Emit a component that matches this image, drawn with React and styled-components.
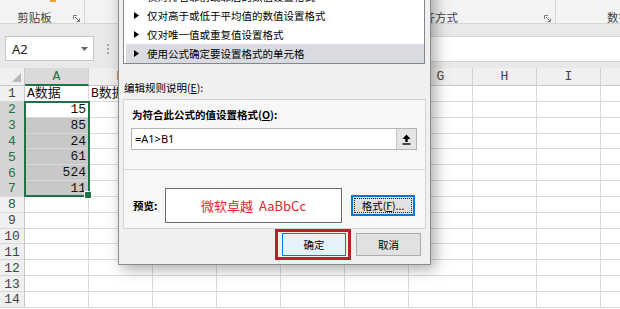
import React from 'react'
import styled, { createGlobalStyle } from 'styled-components'

const ROW_H = 15.85
const GREEN = '#217346'
const COLS = ['A', 'B', 'C', 'D', 'E', 'F', 'G', 'H', 'I', 'J']
const DATA = { A1: 'A数据', B1: 'B数据', A2: 15, A3: 85, A4: 24, A5: 61, A6: 524, A7: 11 }
const RULES = [
  '仅对排名靠前或靠后的数值设置格式',
  '仅对高于或低于平均值的数值设置格式',
  '仅对唯一值或重复值设置格式',
  '使用公式确定要设置格式的单元格',
]

const GlobalStyle = createGlobalStyle`
  html, body { margin: 0; padding: 0; }
  body {
    width: 620px;
    height: 309px;
    overflow: hidden;
    background: #fff;
    font-family: "Noto Sans CJK SC", "Noto Sans", sans-serif;
  }
`

const Screen = styled.div`
  position: relative;
  width: 620px;
  height: 309px;
  overflow: hidden;
  background: #fff;
`

/* ribbon */
const Ribbon = styled.div`
  display: flex;
  height: 24px;
  background: #f3f3f3;
  border-bottom: 1px solid #d5d5d5;
  box-sizing: border-box;
  overflow: hidden;
`

const RibbonGroup = styled.div`
  position: relative;
  flex: 0 0 ${({ $w }) => $w}px;
  display: flex;
  align-items: flex-end;
  justify-content: ${({ $start }) => ($start ? 'flex-start' : 'center')};
  padding-right: ${({ $pr }) => $pr || 0}px;
  padding-left: ${({ $pl }) => $pl || 0}px;
  box-sizing: border-box;
  border-right: 1px solid #d6d6d6;
  font-size: 11.5px;
  line-height: 12px;
  color: #444;
  white-space: nowrap;
`

const Launcher = styled.svg`
  position: absolute;
  right: 4px;
  bottom: 1px;
`

const PasteTip = styled.span`
  position: absolute;
  top: 0;
  left: 50px;
  width: 6px;
  height: 2px;
  background: #f0a030;
`

/* formula bar */
const FormulaArea = styled.div`
  display: flex;
  align-items: center;
  height: 44px;
  padding: 12px 0 7px;
  box-sizing: border-box;
  background: #e9e9e9;
`

const NameBox = styled.div`
  display: flex;
  align-items: center;
  width: 89px;
  height: 25px;
  margin-left: 5px;
  padding: 0 5px 0 6px;
  box-sizing: border-box;
  background: #fff;
  border: 1px solid #c6c6c6;
  font-family: "Noto Sans", sans-serif;
  font-size: 13px;
  color: #222;
  svg { margin-left: auto; }
`

const Dots = styled.div`
  display: flex;
  flex-direction: column;
  gap: 2px;
  margin-left: 13px;
  span { width: 2px; height: 2px; background: #a8a8a8; }
`

const FormulaInput = styled.div`
  flex: 1;
  height: 24px;
  margin-left: 70px;
  background: #fff;
  border: 1px solid #d4d4d4;
  border-right: none;
`

/* sheet */
const Sheet = styled.div`
  display: grid;
  grid-template-columns: 25px repeat(10, 64px);
  grid-template-rows: 18px repeat(14, ${ROW_H}px);
  font-family: "Liberation Mono", "Noto Sans CJK SC", monospace;
  font-size: 13px;
`

const Corner = styled.div`
  display: flex;
  align-items: flex-end;
  justify-content: flex-end;
  padding: 0 3px 3px 0;
  box-sizing: border-box;
  background: #f0f0f0;
  border-right: 1px solid #c8c8c8;
  border-bottom: 1px solid #c8c8c8;
`

const ColHeader = styled.div`
  display: flex;
  align-items: center;
  justify-content: center;
  box-sizing: border-box;
  background: ${({ $active }) => ($active ? '#dadada' : '#f0f0f0')};
  color: ${({ $active }) => ($active ? GREEN : '#444')};
  border-right: 1px solid #d2d2d2;
  border-bottom: ${({ $active }) => ($active ? `2px solid ${GREEN}` : '1px solid #c8c8c8')};
  line-height: 1;
`

const RowHeader = styled.div`
  display: flex;
  align-items: center;
  justify-content: center;
  box-sizing: border-box;
  background: ${({ $active }) => ($active ? '#d4d4d4' : '#f0f0f0')};
  color: ${({ $active }) => ($active ? GREEN : '#444')};
  border-right: 1px solid #c8c8c8;
  border-bottom: 1px solid #d8d8d8;
  padding-top: 1px;
  line-height: 1;
`

const Cell = styled.div`
  position: relative;
  box-sizing: border-box;
  padding: 1px 2px 0;
  background: ${({ $shaded }) => ($shaded ? '#c8c8c8' : '#fff')};
  border-right: 1px solid #dadada;
  border-bottom: 1px solid #dadada;
  text-align: ${({ $num }) => ($num ? 'right' : 'left')};
  line-height: ${ROW_H - 2}px;
  white-space: nowrap;
  color: #111;
`

const SelectionFrame = styled.div`
  position: absolute;
  top: -1px;
  left: -1px;
  width: 66px;
  height: calc(${ROW_H * 6}px + 1px);
  box-sizing: border-box;
  border: 2px solid ${GREEN};
  z-index: 2;
  span {
    position: absolute;
    right: -4px;
    bottom: -4px;
    width: 6px;
    height: 6px;
    background: ${GREEN};
    border: 1px solid #fff;
  }
`

/* dialog */
const Dialog = styled.div`
  position: absolute;
  left: 118px;
  top: -21px;
  width: 313px;
  box-sizing: border-box;
  background: #f0f0f0;
  border: 1px solid #8a8a8a;
  box-shadow: 4px 4px 14px rgba(0, 0, 0, 0.34);
  font-family: "Noto Sans CJK SC", "Noto Sans", sans-serif;
  font-size: 10.5px;
  line-height: 16px;
  color: #000;
  z-index: 5;
  u { text-decoration: underline; }
`

const RuleList = styled.div`
  margin: 6px 5px 0 4px;
  background: #fff;
  border: 1px solid #82878f;
`

const RuleItem = styled.div`
  display: flex;
  align-items: center;
  gap: 8px;
  height: 19px;
  margin-left: 2px;
  padding-left: 8px;
  background: ${({ $selected }) => ($selected ? '#dadbe0' : 'transparent')};
`

const SectionLabel = styled.div`
  margin: 16px 0 3px 5px;
`

const GroupBox = styled.div`
  margin: 0 4px;
  background: #f7f7f7;
  border: 1px solid #d5d5d5;
`

const GroupTitle = styled.div`
  padding: 7px 8px 0;
  font-weight: 700;
`

const FormulaField = styled.div`
  display: flex;
  align-items: stretch;
  height: 22px;
  margin: 5px 8px 0 7px;
  box-sizing: border-box;
  background: #fff;
  border: 1px solid #b4b4b4;
`

const FieldText = styled.div`
  flex: 1;
  display: flex;
  align-items: center;
  padding-left: 3px;
  font-family: "Noto Sans", sans-serif;
  font-size: 11px;
`

const RefButton = styled.div`
  display: flex;
  align-items: center;
  justify-content: center;
  width: 19px;
  background: #e5e5e5;
  border-left: 1px solid #c4c4c4;
`

const Divider = styled.div`
  margin-top: 19px;
  border-top: 1px solid #d8d8d8;
`

const PreviewRow = styled.div`
  display: flex;
  align-items: center;
  padding: 18px 9px 5px;
`

const PreviewLabel = styled.div`
  width: 32px;
  font-weight: 700;
`

const PreviewBox = styled.div`
  display: flex;
  align-items: center;
  justify-content: center;
  gap: 6px;
  width: 177px;
  height: 35px;
  box-sizing: border-box;
  background: #fff;
  border: 1px solid #6e6e6e;
  color: #e3262b;
  font-size: 13px;
`

const DlgButton = styled.div`
  display: flex;
  align-items: center;
  justify-content: center;
  width: ${({ $w }) => $w || 64}px;
  height: ${({ $h }) => $h || 23}px;
  box-sizing: border-box;
  background: ${({ $primary }) => ($primary ? '#e5f1fb' : '#e1e1e1')};
  border: 1px solid ${({ $primary, $focus }) => ($primary || $focus ? '#0078d7' : '#adadad')};
  box-shadow: ${({ $focus }) => ($focus ? 'inset 0 0 0 1px #0078d7' : 'none')};
`

const FocusRing = styled.span`
  display: flex;
  align-items: center;
  justify-content: center;
  width: calc(100% - 4px);
  height: calc(100% - 4px);
  box-sizing: border-box;
  border: 1px dotted #222;
`

const FormatSlot = styled.div`
  margin-left: 9px;
`

const ButtonRow = styled.div`
  display: flex;
  justify-content: flex-end;
  gap: 10px;
  padding: 4px 9px 8px 0;
`

const Highlight = styled.div`
  position: relative;
  &::after {
    content: '';
    position: absolute;
    top: -4px;
    bottom: -4px;
    left: -7px;
    right: -5px;
    border: 3px solid #b8212b;
    pointer-events: none;
  }
`

const LauncherIcon = () => (
  <Launcher width="7" height="7" viewBox="0 0 7 7">
    <path d="M0.5 4V0.5H4M2 2l4.2 4.2M6.5 3.5v3h-3" stroke="#7a7a7a" strokeWidth="1" fill="none" />
  </Launcher>
)

const App = () => {
  const rows = Array.from({ length: 14 }, (_, i) => i + 1)

  return (
    <Screen>
      <GlobalStyle />

      <Ribbon>
        <RibbonGroup $w={85} $pr={15}>
          <PasteTip />
          剪贴板
          <LauncherIcon />
        </RibbonGroup>
        <RibbonGroup $w={230}><LauncherIcon /></RibbonGroup>
        <RibbonGroup $w={241}>对齐方式<LauncherIcon /></RibbonGroup>
        <RibbonGroup $w={120} $start $pl={51}>数字</RibbonGroup>
      </Ribbon>

      <FormulaArea>
        <NameBox>
          A2
          <svg width="7" height="4" viewBox="0 0 7 4"><path d="M0 0h7L3.5 4z" fill="#666" /></svg>
        </NameBox>
        <Dots><span /><span /><span /></Dots>
        <FormulaInput />
      </FormulaArea>

      <Sheet>
        <Corner>
          <svg width="9" height="9" viewBox="0 0 9 9"><path d="M9 0v9H0z" fill="#b9b9b9" /></svg>
        </Corner>
        {COLS.map((c) => (
          <ColHeader key={c} $active={c === 'A'}>{c}</ColHeader>
        ))}
        {rows.map((r) => (
          <React.Fragment key={r}>
            <RowHeader $active={r >= 2 && r <= 7}>{r}</RowHeader>
            {COLS.map((c) => {
              const v = DATA[c + r]
              const inSel = c === 'A' && r >= 2 && r <= 7
              return (
                <Cell key={c} $num={typeof v === 'number'} $shaded={inSel && r !== 2}>
                  {v}
                  {c === 'A' && r === 2 && <SelectionFrame><span /></SelectionFrame>}
                </Cell>
              )
            })}
          </React.Fragment>
        ))}
      </Sheet>

      <Dialog>
        <RuleList>
          {RULES.map((t, i) => (
            <RuleItem key={t} $selected={i === RULES.length - 1}>
              <svg width="5" height="7" viewBox="0 0 5 7"><path d="M0 0l5 3.5L0 7z" fill="#000" /></svg>
              {t}
            </RuleItem>
          ))}
        </RuleList>

        <SectionLabel>编辑规则说明(<u>E</u>):</SectionLabel>

        <GroupBox>
          <GroupTitle>为符合此公式的值设置格式(<u>O</u>):</GroupTitle>
          <FormulaField>
            <FieldText>=A1&gt;B1</FieldText>
            <RefButton>
              <svg width="9" height="11" viewBox="0 0 9 11">
                <path d="M4.5 0.5L8.5 5H5.7v3H3.3V5H0.5z" fill="#000" />
                <rect x="0.5" y="9.3" width="8" height="1.4" fill="#000" />
              </svg>
            </RefButton>
          </FormulaField>
          <Divider />
          <PreviewRow>
            <PreviewLabel>预览:</PreviewLabel>
            <PreviewBox>
              <span>微软卓越</span>
              <span>AaBbCc</span>
            </PreviewBox>
            <FormatSlot>
              <DlgButton $focus $w={64} $h={21}>
                <FocusRing>格式(<u>F</u>)...</FocusRing>
              </DlgButton>
            </FormatSlot>
          </PreviewRow>
        </GroupBox>

        <ButtonRow>
          <Highlight>
            <DlgButton $primary>确定</DlgButton>
          </Highlight>
          <DlgButton $w={65}>取消</DlgButton>
        </ButtonRow>
      </Dialog>
    </Screen>
  )
}

export default App
